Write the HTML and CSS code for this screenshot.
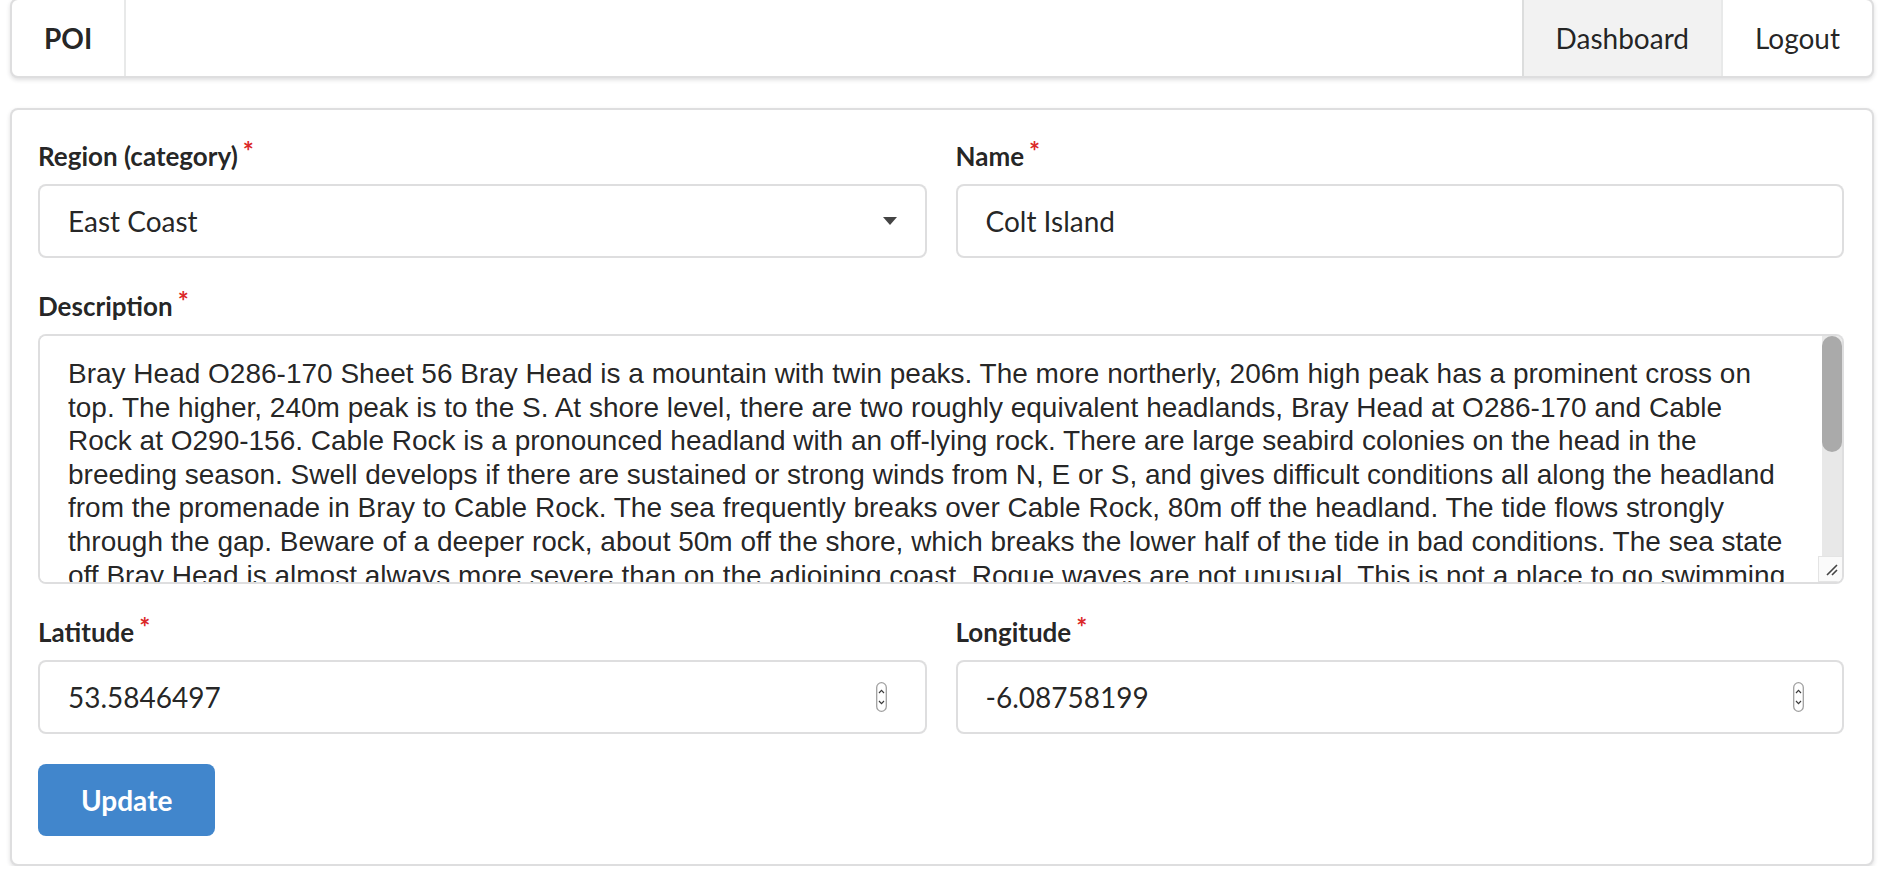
FILE: index.html
```html
<!DOCTYPE html>
<html lang="en">
<head>
<meta charset="utf-8">
<title>POI</title>
<link rel="stylesheet" href="styles.css">
</head>
<body>
<div class="page">
  <nav class="menu">
    <div class="item brand">POI</div>
    <div class="right-menu">
      <a class="item active">Dashboard</a>
      <a class="item">Logout</a>
    </div>
  </nav>

  <form class="segment">
    <div class="fields">
      <div class="field required">
        <label>Region (category)</label>
        <div class="dropdown">
          <span class="dropdown-text">East Coast</span>
          <svg class="caret" width="14" height="8" viewBox="0 0 14 8"><path d="M0 0 H14 L7 8 Z" fill="#444"/></svg>
        </div>
      </div>
      <div class="field required">
        <label>Name</label>
        <input class="input" type="text" value="Colt Island">
      </div>
    </div>

    <div class="field required">
      <label>Description</label>
      <div class="textarea-box">
        <textarea class="textarea">Bray Head O286-170 Sheet 56 Bray Head is a mountain with twin peaks. The more northerly, 206m high peak has a prominent cross on
top. The higher, 240m peak is to the S. At shore level, there are two roughly equivalent headlands, Bray Head at O286-170 and Cable
Rock at O290-156. Cable Rock is a pronounced headland with an off-lying rock. There are large seabird colonies on the head in the
breeding season. Swell develops if there are sustained or strong winds from N, E or S, and gives difficult conditions all along the headland
from the promenade in Bray to Cable Rock. The sea frequently breaks over Cable Rock, 80m off the headland. The tide flows strongly
through the gap. Beware of a deeper rock, about 50m off the shore, which breaks the lower half of the tide in bad conditions. The sea state
off Bray Head is almost always more severe than on the adjoining coast. Rogue waves are not unusual. This is not a place to go swimming
in anything but calm conditions. Landing is possible on the stony beaches either side of the head, but the cliffs above are loose and there is no easy way up from the shore. The railway line runs through tunnels along the face of the head and walkers use the cliff path between Bray and Greystones, which gives good views of the water below. Paddlers heading south should allow for the tide, which turns earlier close inshore, and keep well clear of the breaking ground off Cable Rock in any swell.</textarea>
        <div class="scrollbar">
          <div class="track"><div class="thumb"></div></div>
          <div class="resizer">
            <svg width="14" height="14" viewBox="0 0 14 14"><path d="M3 13 L13 3 M8 13 L13 8" stroke="#444" stroke-width="1.6" fill="none"/></svg>
          </div>
        </div>
      </div>
    </div>

    <div class="fields">
      <div class="field required">
        <label>Latitude</label>
        <div class="number-box">
          <input class="number-input" type="text" value="53.5846497">
          <svg class="spinner" width="11" height="30" viewBox="0 0 11 30"><rect x="0.7" y="0.7" width="9.6" height="28.6" rx="4.8" fill="#fff" stroke="#a0a0a0" stroke-width="1.3"/><path d="M3 11 L5.5 8.4 L8 11 M3 19 L5.5 21.6 L8 19" fill="none" stroke="#3a3a3a" stroke-width="1.2"/></svg>
        </div>
      </div>
      <div class="field required">
        <label>Longitude</label>
        <div class="number-box">
          <input class="number-input" type="text" value="-6.08758199">
          <svg class="spinner" width="11" height="30" viewBox="0 0 11 30"><rect x="0.7" y="0.7" width="9.6" height="28.6" rx="4.8" fill="#fff" stroke="#a0a0a0" stroke-width="1.3"/><path d="M3 11 L5.5 8.4 L8 11 M3 19 L5.5 21.6 L8 19" fill="none" stroke="#3a3a3a" stroke-width="1.2"/></svg>
        </div>
      </div>
    </div>

    <button class="button" type="button">Update</button>
  </form>
</div>
</body>
</html>
```

FILE: styles.css
```css
html, body {
  margin: 0;
  padding: 0;
  background: #fff;
}

body {
  font-family: Lato, "Helvetica Neue", Arial, sans-serif;
  font-size: 28px;
  line-height: 40px;
  color: rgba(0, 0, 0, 0.87);
}

.page {
  margin: 0 10px;
}

/* Menu */
.menu {
  display: flex;
  align-items: stretch;
  height: 80px;
  box-sizing: border-box;
  margin-top: -2px;
  border: 2px solid rgba(34, 36, 38, 0.15);
  border-radius: 8px;
  box-shadow: 0 2px 4px 0 rgba(34, 36, 38, 0.15);
  background: #fff;
  overflow: hidden;
}

.item {
  display: flex;
  align-items: center;
  padding: 0 32px;
  color: rgba(0, 0, 0, 0.87);
  text-decoration: none;
  line-height: 28px;
}

.brand {
  font-weight: 700;
  border-right: 2px solid rgba(34, 36, 38, 0.1);
}

.right-menu {
  display: flex;
  margin-left: auto;
}

.right-menu .item {
  border-left: 2px solid rgba(34, 36, 38, 0.1);
}

.item.active {
  background: rgba(0, 0, 0, 0.05);
}

/* Segment / form */
.segment {
  display: block;
  margin: 30px 0 0;
  padding: 26px 28px 28px 26px;
  border: 2px solid rgba(34, 36, 38, 0.15);
  border-radius: 8px;
  box-shadow: 0 2px 4px 0 rgba(34, 36, 38, 0.15);
  background: #fff;
}

.fields {
  display: grid;
  grid-template-columns: 1fr 1fr;
  column-gap: 29px;
}

.field {
  margin-bottom: 28px;
  min-width: 0;
}

.field > label {
  display: block;
  margin: 0 0 8px;
  font-size: 26px;
  font-weight: 700;
  line-height: 40px;
  color: rgba(0, 0, 0, 0.87);
}

.field.required > label::after {
  content: "*";
  color: #db2828;
  margin-left: 5px;
  position: relative;
  top: -5px;
}

.input,
.dropdown,
.number-box {
  display: block;
  width: 100%;
  box-sizing: border-box;
  height: 74px;
  margin: 0;
  padding: 18px 28px;
  font-family: Lato, "Helvetica Neue", Arial, sans-serif;
  font-size: 28px;
  line-height: 34px;
  color: rgba(0, 0, 0, 0.87);
  background: #fff;
  border: 2px solid rgba(34, 36, 38, 0.15);
  border-radius: 8px;
  outline: none;
}

.dropdown {
  display: flex;
  align-items: center;
  justify-content: space-between;
}

.dropdown-text {
  line-height: 34px;
}

.caret {
  display: block;
  flex: none;
}

.number-box {
  display: flex;
  align-items: center;
  padding: 18px 38px 18px 28px;
}

.number-input {
  flex: 1;
  min-width: 0;
  border: 0;
  padding: 0;
  margin: 0;
  outline: none;
  background: transparent;
  font-family: Lato, "Helvetica Neue", Arial, sans-serif;
  font-size: 28px;
  line-height: 34px;
  height: 34px;
  color: rgba(0, 0, 0, 0.87);
}

.spinner {
  display: block;
  flex: none;
}

/* Textarea with drawn scrollbar */
.textarea-box {
  display: flex;
  height: 250px;
  box-sizing: border-box;
  border: 2px solid rgba(34, 36, 38, 0.15);
  border-radius: 8px;
  background: #fff;
  overflow: hidden;
}

.textarea {
  flex: 1;
  min-width: 0;
  display: block;
  height: 100%;
  box-sizing: border-box;
  margin: 0;
  padding: 21px 22px 0 28px;
  font-family: "Liberation Sans", Arial, Helvetica, sans-serif;
  font-size: 28px;
  line-height: 33.6px;
  color: rgba(0, 0, 0, 0.87);
  background: #fff;
  border: 0;
  outline: none;
  resize: none;
  overflow: hidden;
}

.scrollbar {
  flex: none;
  width: 20px;
  display: flex;
  flex-direction: column;
}

.track {
  flex: 1;
  background: #e8e8e8;
}

.thumb {
  height: 116px;
  background: #aaaaaa;
  border-radius: 10px;
}

.resizer {
  height: 26px;
  width: 26px;
  margin-left: -4px;
  box-sizing: border-box;
  border: 1px solid #e4e4e4;
  background: #fafafa;
  display: flex;
  align-items: center;
  justify-content: center;
}

.resizer svg {
  display: block;
}

.button {
  display: inline-block;
  margin: 2px 0 0;
  padding: 22px 43px;
  font-family: Lato, "Helvetica Neue", Arial, sans-serif;
  font-size: 28px;
  font-weight: 700;
  line-height: 28px;
  color: #fff;
  background: #4186cc;
  border: 0;
  border-radius: 8px;
  cursor: pointer;
}
```
